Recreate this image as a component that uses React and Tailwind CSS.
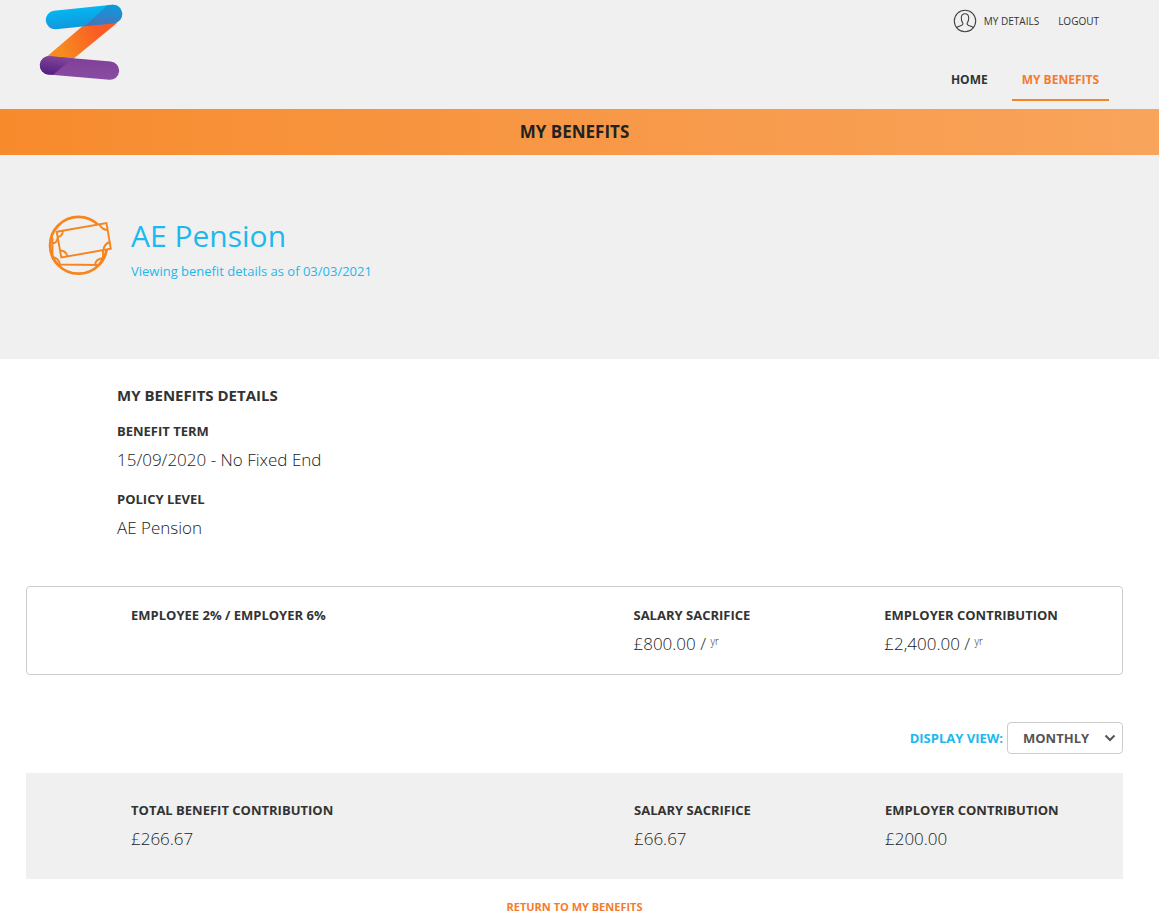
import React, { useState } from 'react';

const Logo = () => (
    <svg className="h-[76px] w-[84px]" viewBox="39 4 84 76" role="img" aria-label="Z">
        <defs>
            <linearGradient id="logoTop" x1="0" y1="0" x2="0.3" y2="1">
                <stop offset="0" stopColor="#00c0f8" />
                <stop offset="1" stopColor="#1296dc" />
            </linearGradient>
            <linearGradient id="logoTopShade" x1="0.6" y1="0" x2="0.4" y2="1">
                <stop offset="0" stopColor="#0a9adf" />
                <stop offset="1" stopColor="#4b72b8" />
            </linearGradient>
            <linearGradient id="logoMiddle" x1="0" y1="0.6" x2="1" y2="0.4">
                <stop offset="0.2" stopColor="#f68b1f" />
                <stop offset="0.8" stopColor="#fb5a25" />
            </linearGradient>
            <linearGradient id="logoBottom" x1="0" y1="0" x2="0" y2="1">
                <stop offset="0" stopColor="#7f3f98" />
                <stop offset="1" stopColor="#8a4ba3" />
            </linearGradient>
            <linearGradient id="logoBottomShade" x1="0.6" y1="0" x2="0.3" y2="1">
                <stop offset="0" stopColor="#85479a" />
                <stop offset="1" stopColor="#521e80" />
            </linearGradient>
        </defs>
        <path d="M85 24 L116 22 L117 23 L72 60 L44 59 Z" fill="url(#logoMiddle)" />
        <path d="M54 10.850 L112 4.850 A9 9 0 0 1 114 23.150 L56 29.150 A9 9 0 0 1 54 10.850 Z" fill="url(#logoTop)" />
        <path d="M107 5.400 L112 4.850 A9 9 0 0 1 114 23.150 L84.500 26.200 Z" fill="url(#logoTopShade)" />
        <path d="M49.800 56.200 L110.800 61.600 A9 9 0 0 1 109.200 79.800 L48.200 74.400 A9 9 0 0 1 49.800 56.200 Z" fill="url(#logoBottom)" />
        <path d="M49.800 56.200 L73 58.300 L53 74.800 L48.200 74.400 A9 9 0 0 1 49.800 56.200 Z" fill="url(#logoBottomShade)" />
    </svg>
);

const UserIcon = () => (
    <svg className="size-6" viewBox="0 0 24 24" fill="none" stroke="#444" strokeWidth="1.1" aria-hidden="true">
        <circle cx="12" cy="12" r="10.700" />
        <path d="M3.800 18.700 C5.200 16.700 9.900 17.300 9.900 14.800 C9.900 13.800 8.300 12.600 8.300 8.900 C8.300 6.200 9.800 4.700 12 4.700 C14.200 4.700 15.700 6.200 15.700 8.900 C15.700 12.600 14.100 13.800 14.100 14.800 C14.100 17.300 18.800 16.700 20.200 18.700" />
    </svg>
);

const PensionIcon = () => (
    <svg className="h-[62px] w-16" viewBox="48 214 64 62" fill="none" stroke="#f6851f" strokeWidth="1.900" aria-hidden="true">
        <circle cx="78.500" cy="245.300" r="28.400" strokeWidth="2.800" />
        <path d="M52.500 238 V258 L57.500 264.500 L99 265 L103 258 V251 M52 243.500 Q57 243.500 57.500 238 M52.500 257 Q59 258 60 264.500 M95 265 Q95.500 259 103 258" />
        <path d="M56.700 231.700 L106.500 223 L110.800 248.800 L61.300 257.500 Z" fill="#f0f0f0" />
        <path d="M63 230.500 Q62.500 236.500 57.500 237 M99.500 224.300 Q101.500 229.500 107.500 230 M110 242 Q104 244 103.500 250 M60 250.500 Q66 250.500 67.500 256.500" />
    </svg>
);

const Field = ({ label, children }) => (
    <div>
        <h3 className="text-[13px] leading-5 font-bold">{label}</h3>
        {children && <p className="mt-[9px] text-[17px] leading-5 font-light text-[#222]">{children}</p>}
    </div>
);

const PerYear = ({ amount }) => (
    <>
        {amount} / <sup className="text-[10px]">yr</sup>
    </>
);

const App = () => {
    const [view, setView] = useState('monthly');

    return (
        <div className="bg-white font-['Open_Sans',sans-serif] text-[#333]">
            <header className="flex h-[109px] justify-between bg-[#f0f0f0] pt-1 pr-[50px] pl-[39px]">
                <a href="#home" className="self-start">
                    <Logo />
                </a>
                <div className="flex flex-col justify-between pb-2">
                    <div className="flex items-center justify-end gap-[19px] pt-[5px] pr-[10px] text-[10px]">
                        <a href="#details" className="flex items-center gap-[7px]">
                            <UserIcon />
                            MY DETAILS
                        </a>
                        <a href="#logout">LOGOUT</a>
                    </div>
                    <nav className="flex justify-end gap-[14px] text-xs leading-5 font-bold">
                        <a href="#home" className="px-2.5 pb-[11px]">HOME</a>
                        <a href="#benefits" className="border-b-2 border-[#f6851f] px-2.5 pb-[9px] text-[#f47b30]">
                            MY BENEFITS
                        </a>
                    </nav>
                </div>
            </header>

            <div className="bg-linear-to-r from-[#f78b2c] to-[#f8a45b] py-[11px] pr-[10px] text-center">
                <h1 className="text-[17px] leading-6 font-bold text-[#222]">MY BENEFITS</h1>
            </div>

            <section className="flex h-[204px] items-start gap-[19px] bg-[#f0f0f0] px-12 pt-[59px] text-[#1cb8ee]">
                <PensionIcon />
                <div>
                    <h2 className="text-3xl leading-[43px]">AE Pension</h2>
                    <p className="mt-1 text-[13px] leading-5">Viewing benefit details as of 03/03/2021</p>
                </div>
            </section>

            <main className="pr-9 pl-[26px]">
                <section className="space-y-[19px] pt-[26px] pl-[91px]">
                    <h2 className="mb-4 text-[15px] leading-5 font-bold">MY BENEFITS DETAILS</h2>
                    <Field label="BENEFIT TERM">15/09/2020 - No Fixed End</Field>
                    <Field label="POLICY LEVEL">AE Pension</Field>
                </section>

                <section className="mt-12 grid h-[89px] grid-cols-[503fr_251fr_238fr] rounded border border-[#ccc] pt-[18px] pl-[104px]">
                    <Field label="EMPLOYEE 2% / EMPLOYER 6%" />
                    <Field label="SALARY SACRIFICE"><PerYear amount="£800.00" /></Field>
                    <Field label="EMPLOYER CONTRIBUTION"><PerYear amount="£2,400.00" /></Field>
                </section>

                <div className="mt-[47px] flex items-baseline justify-end gap-1 text-[13px] font-bold">
                    <label htmlFor="view" className="text-[#1cb8ee]">DISPLAY VIEW:</label>
                    <div className="relative">
                        <select
                            id="view"
                            value={view}
                            onChange={(e) => setView(e.target.value)}
                            className="block h-8 w-[116px] appearance-none rounded border border-[#ccc] bg-white pt-0.5 pl-[15px] text-[#555]"
                        >
                            <option value="monthly">MONTHLY</option>
                            <option value="annual">ANNUAL</option>
                        </select>
                        <svg
                            className="pointer-events-none absolute top-3 right-[7px] h-2 w-3"
                            viewBox="0 0 12 8"
                            fill="none"
                            stroke="#555"
                            strokeWidth="2"
                            aria-hidden="true"
                        >
                            <path d="M1.500 1.500 L6 6 L10.500 1.500" />
                        </svg>
                    </div>
                </div>

                <section className="mt-[19px] grid h-[106px] grid-cols-[503fr_251fr_238fr] bg-[#f0f0f0] pt-[27px] pl-[105px]">
                    <Field label="TOTAL BENEFIT CONTRIBUTION">£266.67</Field>
                    <Field label="SALARY SACRIFICE">£66.67</Field>
                    <Field label="EMPLOYER CONTRIBUTION">£200.00</Field>
                </section>

                <div className="pt-[14px] pb-1 text-center">
                    <a href="#benefits" className="text-[11px] leading-5 font-bold text-[#f47b30]">
                        RETURN TO MY BENEFITS
                    </a>
                </div>
            </main>
        </div>
    );
};

export default App;
